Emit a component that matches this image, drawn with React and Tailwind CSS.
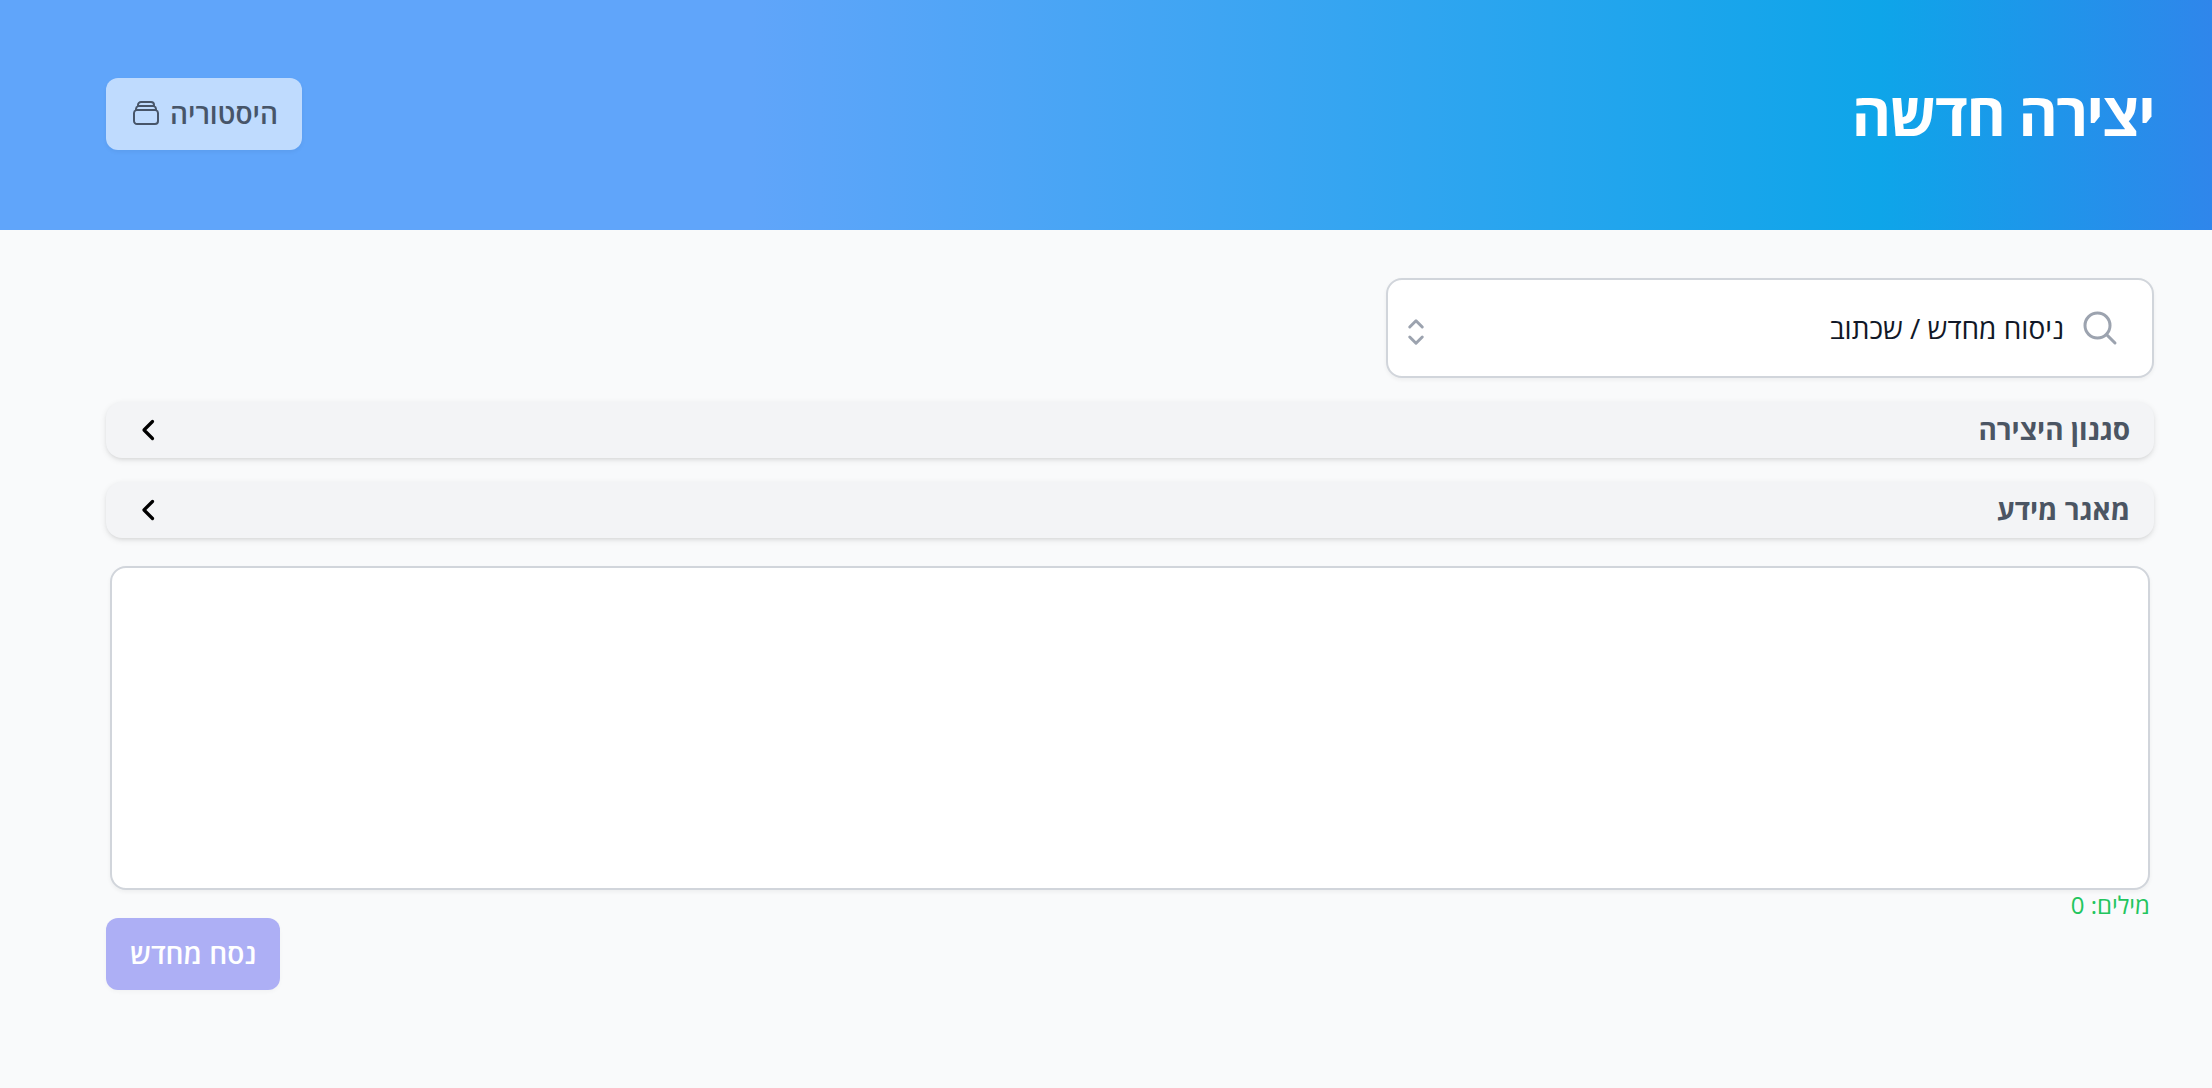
import React, { useState } from 'react';

const MagnifyingGlassIcon = ({ className }) => (
    <svg className={className} fill="none" viewBox="0 0 24 24" strokeWidth={1.8} stroke="currentColor" aria-hidden="true">
        <path strokeLinecap="round" strokeLinejoin="round" d="m21 21-5.197-5.197m0 0A7.5 7.5 0 1 0 5.196 5.196a7.5 7.5 0 0 0 10.607 10.607Z" />
    </svg>
);

const ChevronUpDownIcon = ({ className }) => (
    <svg className={className} fill="none" viewBox="0 0 24 24" strokeWidth={1.8} stroke="currentColor" aria-hidden="true">
        <path strokeLinecap="round" strokeLinejoin="round" d="M8.25 15 12 18.75 15.75 15m-7.5-6L12 5.25 15.75 9" />
    </svg>
);

const RectangleStackIcon = ({ className }) => (
    <svg className={className} fill="none" viewBox="0 0 24 24" strokeWidth={1.5} stroke="currentColor" aria-hidden="true">
        <path strokeLinecap="round" strokeLinejoin="round" d="M6 6.878V6a2.25 2.25 0 0 1 2.25-2.25h7.5A2.25 2.25 0 0 1 18 6v.878m-12 0c.235-.083.487-.128.75-.128h10.5c.263 0 .515.045.75.128m-12 0A2.25 2.25 0 0 0 4.5 9v.878m13.5-3A2.25 2.25 0 0 1 19.5 9v.878m0 0a2.246 2.246 0 0 0-.75-.128H5.25c-.263 0-.515.045-.75.128m15 0A2.25 2.25 0 0 1 21 12v6a2.25 2.25 0 0 1-2.25 2.25H5.25A2.25 2.25 0 0 1 3 18v-6c0-.98.626-1.813 1.5-2.122" />
    </svg>
);

const ChevronLeftIcon = ({ className }) => (
    <svg className={className} fill="none" viewBox="0 0 40 40" strokeWidth={3.2} stroke="currentColor" aria-hidden="true">
        <path strokeLinecap="round" strokeLinejoin="round" d="M22.500 12.500l-8.500 8.500 8.500 8.500" />
    </svg>
);

const sections = ['סגנון היצירה', 'מאגר מידע'];

const App = () => {
    const [text, setText] = useState('');
    const words = text.trim() ? text.trim().split(/\s+/).length : 0;

    return (
        <div dir="rtl" className="min-h-screen bg-[#f9fafb] font-['Open_Sans','Noto_Sans',sans-serif] text-[28px] leading-[38px]">

            {/* Header */}
            <header className="flex items-start justify-between bg-[linear-gradient(to_left,#2f86eb,#0ea5e9_15%,#60a5fa_66%)] ps-[58px] pe-[106px] pt-[78px] pb-20">
                <h1 className="text-[60px] leading-[70px] font-bold tracking-tight text-white">יצירה חדשה</h1>
                <button type="button" className="flex items-center gap-2 rounded-xl bg-[#bfdbfe] px-6 pt-4 pb-[18px] font-semibold text-[#475569] shadow-[0_2px_4px_rgb(0_0_0/0.05)]">
                    היסטוריה
                    <RectangleStackIcon className="size-8" />
                </button>
            </header>

            <main className="flex flex-col gap-6 ps-[58px] pe-[106px] pt-12">

                {/* Template picker */}
                <div className="relative w-3/8">
                    <select
                        aria-label="סוג היצירה"
                        className="block h-[100px] w-full appearance-none rounded-2xl border-2 border-[#d1d5db] bg-white ps-[88px] pe-20 text-[#111827] shadow-[0_2px_4px_rgb(0_0_0/0.05)]"
                    >
                        <option>ניסוח מחדש / שכתוב</option>
                    </select>
                    <MagnifyingGlassIcon className="pointer-events-none absolute top-[30px] right-[34px] size-10 text-[#9ca3af]" />
                    <ChevronUpDownIcon className="pointer-events-none absolute top-[34px] left-[10px] size-10 text-[#9ca3af]" />
                </div>

                {/* Collapsible sections */}
                {sections.map((title) => (
                    <button
                        key={title}
                        type="button"
                        className="flex h-14 items-center justify-between rounded-2xl bg-[#f3f4f6] px-6 pb-0.5 font-bold text-[#4b5563] shadow-[0_2px_6px_rgb(0_0_0/0.1),0_2px_4px_-2px_rgb(0_0_0/0.1)]"
                    >
                        {title}
                        <ChevronLeftIcon className="size-10 text-black" />
                    </button>
                ))}

                {/* Editor */}
                <div className="px-1 pt-1">
                    <textarea
                        id="source-text"
                        aria-label="טקסט"
                        value={text}
                        onChange={(e) => setText(e.target.value)}
                        className="block h-[324px] w-full resize-none rounded-2xl border-2 border-[#d1d5db] bg-white p-4 shadow-[0_2px_4px_rgb(0_0_0/0.05)]"
                    />
                    <p className="h-7 text-2xl leading-[30px] text-[#22c55e]">מילים: {words}</p>
                </div>
            </main>

            <footer className="flex justify-end pe-[106px] pb-24">
                <button type="button" className="rounded-xl bg-[#adaff5] px-6 pt-4 pb-[18px] font-semibold text-white shadow-[0_2px_4px_rgb(0_0_0/0.03)]">
                    נסח מחדש
                </button>
            </footer>
        </div>
    );
};

export default App;
